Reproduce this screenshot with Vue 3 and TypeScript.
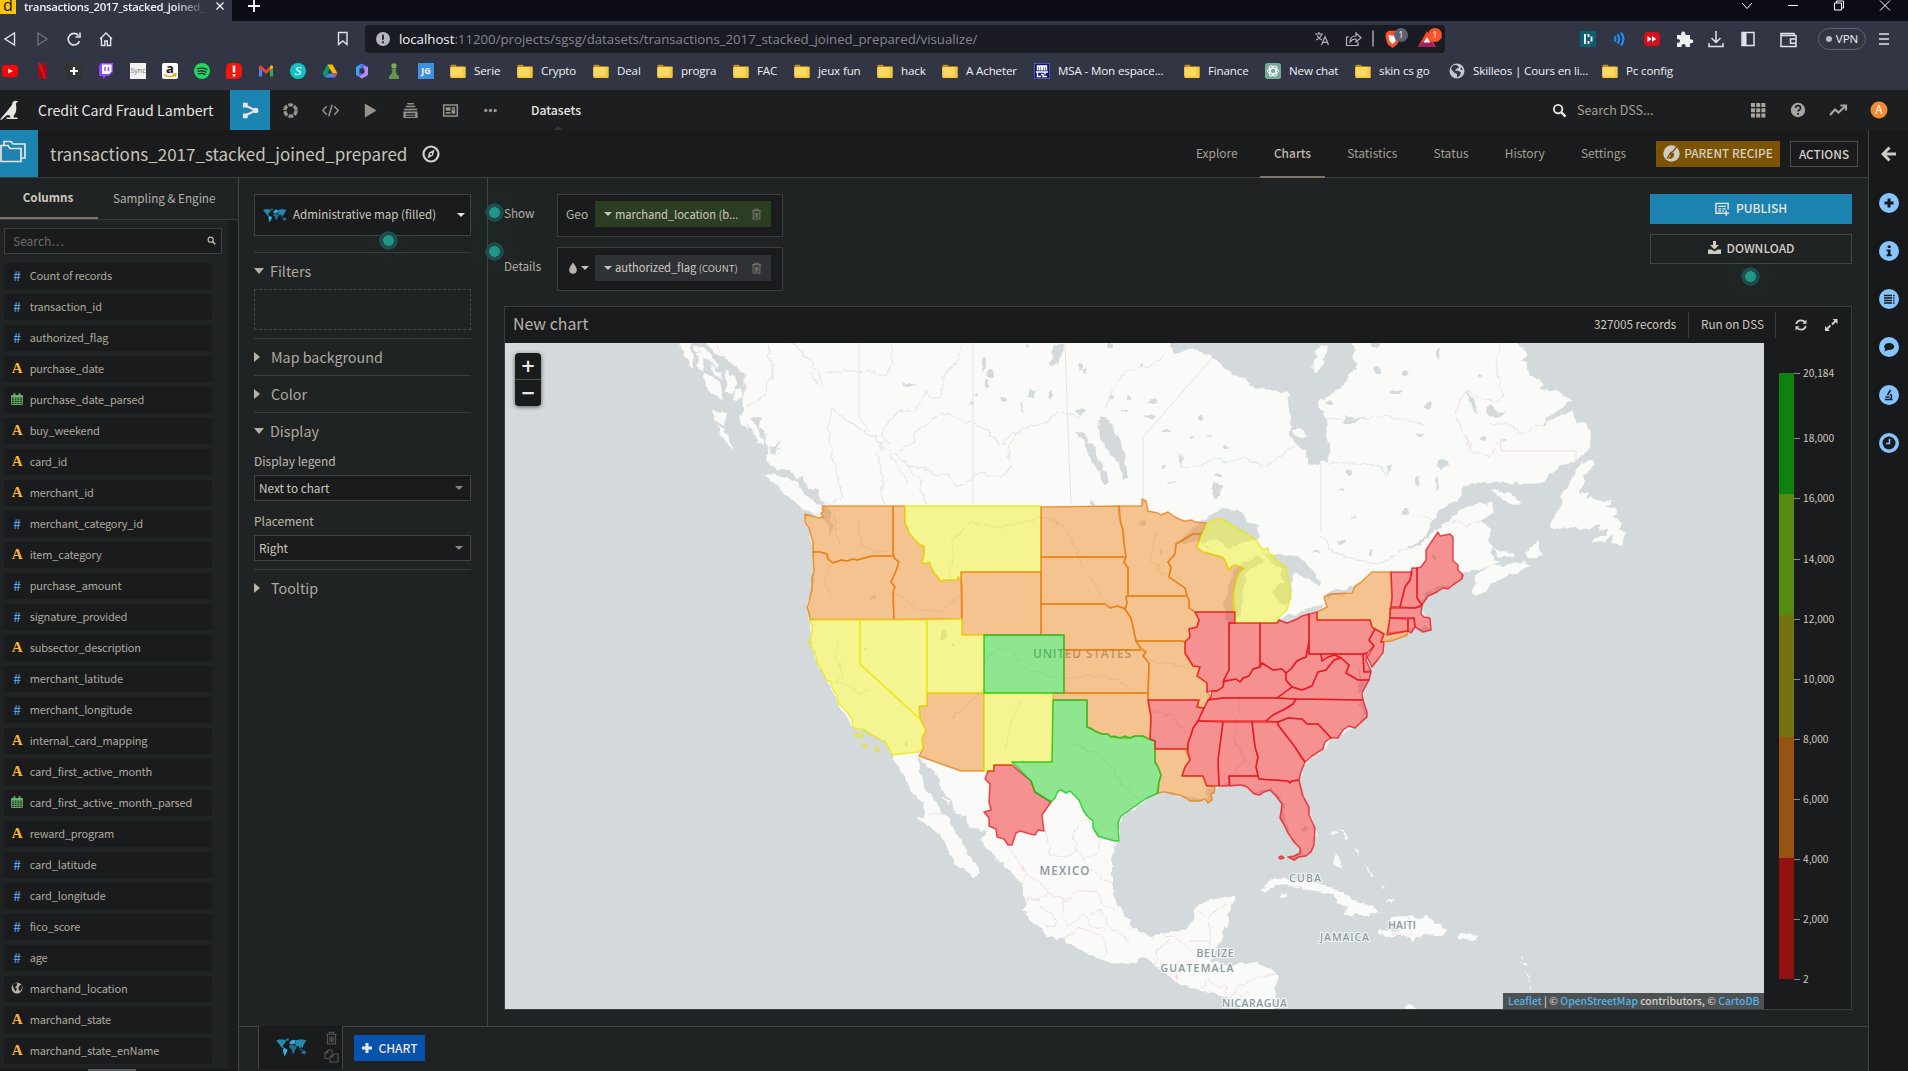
<script setup lang="ts">
interface Bookmark { label: string; icon: string; width: number }
interface Site { icon: string; letter?: string }
interface Column { name: string; kind: 'num' | 'text' | 'date' | 'place-kind' }
interface Region { tone: 'red' | 'orange' | 'yellow' | 'green'; pts: string }

const sites: Site[] = [
  { icon: 'youtube' }, { icon: 'netflix' }, { icon: 'cross' }, { icon: 'twitch' }, { icon: 'sync', letter: 'Sync' },
  { icon: 'amazon', letter: 'a' }, { icon: 'spotify' }, { icon: 'alert' }, { icon: 'gmail' }, { icon: 'letter-s', letter: 'S' },
  { icon: 'drive' }, { icon: 'office' }, { icon: 'pawn' }, { icon: 'jg', letter: 'JG' },
]

const bookmarks: Bookmark[] = [
  { label: 'Serie', icon: 'folder', width: 67 },
  { label: 'Crypto', icon: 'folder', width: 76 },
  { label: 'Deal', icon: 'folder', width: 64 },
  { label: 'progra', icon: 'folder', width: 76 },
  { label: 'FAC', icon: 'folder', width: 61 },
  { label: 'jeux fun', icon: 'folder', width: 83 },
  { label: 'hack', icon: 'folder', width: 65 },
  { label: 'A Acheter', icon: 'folder', width: 92 },
  { label: 'MSA - Mon espace...', icon: 'msa', width: 150 },
  { label: 'Finance', icon: 'folder', width: 81 },
  { label: 'New chat', icon: 'gpt', width: 90 },
  { label: 'skin cs go', icon: 'folder', width: 94 },
  { label: 'Skilleos | Cours en li...', icon: 'globe', width: 153 },
  { label: 'Pc config', icon: 'folder', width: 90 },
]

const headerTools: string[] = ['flow', 'recycle', 'code', 'play', 'stack', 'news', 'dots']
const sections: string[] = ['Explore', 'Charts', 'Statistics', 'Status', 'History', 'Settings']
const sideTools: string[] = ['plus', 'info', 'list', 'chat', 'lab', 'clock']

const columns: Column[] = [
  { name: 'Count of records', kind: 'num' },
  { name: 'transaction_id', kind: 'num' },
  { name: 'authorized_flag', kind: 'num' },
  { name: 'purchase_date', kind: 'text' },
  { name: 'purchase_date_parsed', kind: 'date' },
  { name: 'buy_weekend', kind: 'text' },
  { name: 'card_id', kind: 'text' },
  { name: 'merchant_id', kind: 'text' },
  { name: 'merchant_category_id', kind: 'num' },
  { name: 'item_category', kind: 'text' },
  { name: 'purchase_amount', kind: 'num' },
  { name: 'signature_provided', kind: 'num' },
  { name: 'subsector_description', kind: 'text' },
  { name: 'merchant_latitude', kind: 'num' },
  { name: 'merchant_longitude', kind: 'num' },
  { name: 'internal_card_mapping', kind: 'text' },
  { name: 'card_first_active_month', kind: 'text' },
  { name: 'card_first_active_month_parsed', kind: 'date' },
  { name: 'reward_program', kind: 'text' },
  { name: 'card_latitude', kind: 'num' },
  { name: 'card_longitude', kind: 'num' },
  { name: 'fico_score', kind: 'num' },
  { name: 'age', kind: 'num' },
  { name: 'marchand_location', kind: 'place-kind' },
  { name: 'marchand_state', kind: 'text' },
  { name: 'marchand_state_enName', kind: 'text' },
]

const legendTicks: [number, string][] = [
  [30, '20,184'], [95, '18,000'], [155, '16,000'], [216, '14,000'], [276, '12,000'], [336, '10,000'],
  [396, '8,000'], [456, '6,000'], [516, '4,000'], [576, '2,000'], [636, '2'],
]
const legendBands: [number, number, string][] = [
  [30, 121, '#0f810f'], [151, 121, '#548c11'], [272, 122, '#74740f'], [394, 121, '#955411'], [515, 121, '#921212'],
]

const mainland = '706,343 712,352 722,357 734,365 745,374 746,388 741,398 742,409 741,418 750,427 755,432 760,440 764,447 766,440 768,452 767,462 773,467 780,472 786,474 793,474 797,480 806,484 812,495 822,500 824,505 828,515 829,530 822,518 805,515 805,524 809,530 813,550 814,575 812,590 809,600 807,608 810,620 812,635 810,645 815,655 817,665 824,675 830,685 837,702 848,718 853,728 865,730 875,735 885,742 892,754 895,763 902,772 907,783 912,793 922,802 926,812 924,818 916,818 930,826 937,831 944,840 949,852 956,864 966,870 974,878 980,872 979,868 968,854 965,845 956,833 948,818 942,812 935,801 929,793 922,780 918,768 917,758 932,769 938,777 941,788 950,800 955,811 966,818 968,826 976,829 988,831 981,840 984,846 990,850 1000,862 1012,873 1022,885 1023,893 1027,903 1023,910 1027,918 1036,925 1047,936 1062,938 1074,948 1096,956 1110,963 1128,966 1140,960 1147,958 1155,965 1166,973 1178,984 1200,990 1215,994 1228,999 1235,1004 1240,1009 1240,1020 1274,1020 1274,1009 1275,990 1278,975 1270,968 1258,963 1245,964 1230,965 1211,961 1214,955 1219,945 1223,940 1222,932 1228,922 1228,915 1234,902 1237,896 1232,896 1220,898 1205,901 1197,907 1195,916 1190,925 1183,930 1172,932 1160,934 1150,937 1143,932 1134,929 1127,918 1118,904 1113,894 1112,885 1112,860 1115,845 1119,840 1119,824 1122,816 1135,808 1157,793 1165,792 1175,794 1188,797 1200,798 1208,801 1204,793 1207,787 1219,787 1230,784 1247,785 1255,792 1270,788 1280,798 1285,805 1284,820 1290,834 1296,845 1302,850 1302,856 1306,856 1314,845 1315,830 1309,812 1302,795 1299,780 1305,764 1315,756 1325,748 1332,738 1341,736 1353,727 1365,715 1363,708 1358,706 1364,702 1362,693 1358,688 1360,680 1357,660 1362,680 1369,680 1371,666 1383,653 1384,643 1391,639 1407,633 1410,629 1418,628 1425,628 1430,628 1430,618 1422,612 1421,603 1426,594 1436,588 1448,585 1460,578 1463,573 1472,569 1481,569 1487,567 1500,562 1490,553 1493,547 1488,540 1491,530 1482,522 1492,513 1493,503 1478,502 1465,508 1456,514 1442,525 1431,535 1420,545 1405,549 1425,538 1431,522 1440,510 1458,500 1464,487 1473,483 1496,482 1518,484 1543,483 1558,467 1576,460 1589,450 1590,430 1583,420 1577,424 1572,410 1556,417 1540,428 1547,419 1571,402 1566,395 1552,390 1540,391 1544,385 1538,378 1530,376 1527,366 1522,360 1526,353 1518,343 1518,330 1353,330 1353,343 1355,367 1348,378 1339,388 1326,398 1318,402 1326,417 1327,437 1331,449 1326,463 1321,459 1318,465 1310,463 1304,450 1295,443 1289,433 1291,418 1287,407 1288,393 1279,390 1257,388 1246,380 1228,372 1214,358 1192,349 1174,354 1170,343 1170,330 706,330'

const islands: string[] = [
  '680,340 690,340 694,360 692,369 685,358',
  '697,352 704,354 702,373 697,366 699,360',
  '693,345 704,348 711,356 719,365 716,369 708,361',
  '704,373 713,376 721,388 723,400 714,396 706,386',
  '710,365 718,371 723,379 716,377',
  '724,370 731,376 728,383',
  '727,380 734,373 737,384 732,396 727,390',
  '735,390 741,388 740,397 735,403',
  '711,412 727,413 724,425 718,422',
  '715,425 724,428 730,440 734,451 725,441',
  '739,415 745,420 749,429 742,424',
  '752,430 758,433 762,445 757,442',
  '765,474 777,475 790,480 798,482 803,492 812,500 823,507 822,517 813,514 802,508 795,502 783,493 777,485 770,482',
  '1594,460 1582,462 1574,474 1568,488 1560,494 1563,504 1558,510 1550,525 1556,529 1572,528 1590,529 1600,525 1598,531 1609,528 1605,536 1596,537 1590,542 1605,541 1613,534 1612,543 1621,545 1626,532 1619,531 1623,524 1612,517 1618,513 1616,507 1605,507 1612,500 1603,503 1594,498 1586,500 1590,494 1579,492 1585,481 1583,475 1592,468',
  '1491,490 1509,493 1522,503 1518,505 1504,501',
  '1473,574 1476,584 1472,589 1478,595 1487,591 1491,583 1505,577 1518,571 1530,567 1524,562 1508,563 1502,566 1493,564 1484,570',
  '1494,548 1500,552 1514,553 1514,557 1503,558 1496,554',
  '1537,540 1530,548 1525,554 1529,559 1543,556 1540,550',
  '1316,350 1322,345 1328,348 1324,360 1316,374 1313,369',
  '1292,431 1299,428 1306,436 1300,438',
  '1261,890 1269,882 1282,877 1295,880 1308,881 1329,886 1343,894 1357,902 1371,906 1381,912 1369,915 1343,915 1349,908 1337,903 1331,894 1316,891 1294,886 1278,884 1265,892',
  '1280,892 1286,893 1284,898 1280,896',
  '1390,917 1410,916 1427,917 1438,924 1447,930 1443,936 1427,934 1416,937 1412,943 1408,936 1396,936 1386,937 1378,933 1381,930 1400,932 1396,923 1389,921',
  '1460,933 1475,934 1478,937 1474,940 1460,939',
  '1336,853 1341,862 1342,870 1337,866 1334,858',
  '1328,832 1337,831 1337,833 1330,834',
  '1339,829 1346,832 1348,839 1345,842 1345,836',
  '1354,848 1359,852 1358,855',
  '1364,862 1374,877 1371,876',
  '1380,884 1385,886 1382,888',
  '1388,901 1394,899 1392,903 1387,903',
  '1404,1009 1407,1004 1413,1005 1416,1012 1404,1012',
  '944,797 950,802 947,804',
  '1521,957 1524,957 1523,960',
  '1521,962 1525,962 1527,966 1523,964',
  '1525,972 1529,977 1528,982',
  '1530,984 1532,988 1530,990',
  '1391,641 1405,634 1407,635 1392,642',
]

const lakes: string[] = [
  '1180,541 1190,530 1208,516 1222,508 1243,511 1247,522 1258,525 1260,538 1250,541 1240,544 1230,549 1222,543 1213,538 1204,545 1197,541 1184,543',
  '1235,567 1228,586 1224,605 1227,622 1233,624 1240,617 1243,600 1241,590 1247,580 1244,573 1256,566 1266,561 1258,557 1243,562',
  '1262,553 1275,555 1290,556 1300,557 1309,567 1320,580 1319,584 1305,578 1297,572 1291,580 1292,595 1287,606 1280,602 1273,593 1276,587 1284,581 1280,568 1270,561',
  '1278,620 1288,616 1303,611 1316,606 1326,604 1316,612 1303,617 1287,624 1278,623',
  '1324,594 1337,589 1352,587 1354,592 1341,595 1326,598',
  '1099,417 1109,419 1113,430 1118,438 1124,454 1128,478 1123,481 1120,463 1111,455 1106,447 1100,440',
  '1076,432 1086,433 1089,443 1095,446 1099,460 1107,473 1110,482 1103,485 1100,473 1090,460 1085,443',
  '1211,483 1217,484 1222,484 1221,498 1214,499 1211,493',
  '1030,390 1037,389 1034,397 1027,396',
  '1054,345 1064,343 1061,358 1055,367 1050,364',
  '1365,417 1352,424 1342,424 1345,415 1350,418',
  '1390,465 1393,466 1385,477 1383,481',
  '1492,404 1497,412 1505,414 1500,418 1491,416 1486,407',
  '1466,388 1474,402 1480,415 1470,406',
  '1438,460 1446,459 1448,466 1442,469 1438,465',
  '808,369 816,380 820,388 814,379',
  '768,446 774,447 781,438 776,450 783,448 777,453 770,454',
  '751,417 760,418 759,427 765,430 766,444 760,436 756,426',
  '779,469 790,470 797,478 803,477 806,490 817,490 822,503 810,496 800,484 788,479 778,474',
  '824,506 829,508 832,520 833,530 828,535 830,522 825,514',
]
const ponds: [number, number, number, number][] = [
  [984, 363, 3, 7], [991, 375, 3, 5], [987, 384, 2, 4], [1004, 399, 3, 3], [1050, 393, 2, 4], [972, 403, 2, 2], [1022, 408, 1, 5],
  [1080, 411, 4, 3], [1085, 372, 3, 3], [1110, 346, 3, 3], [1081, 366, 2, 4], [1150, 417, 6, 2], [1153, 401, 4, 3], [1112, 395, 3, 2],
  [1129, 398, 3, 2], [1124, 410, 3, 1], [1142, 365, 2, 2], [1200, 418, 4, 2], [1166, 431, 5, 1], [1192, 437, 2, 2], [1209, 435, 3, 1],
  [1226, 447, 2, 2], [1163, 466, 2, 3], [1171, 483, 5, 1], [1180, 462, 1, 6], [1219, 475, 3, 2], [1377, 370, 4, 3], [1405, 373, 3, 3],
  [1396, 392, 7, 2], [1355, 366, 2, 4], [1329, 402, 3, 2], [1428, 406, 3, 4], [1420, 435, 4, 2], [1349, 472, 2, 4], [1342, 490, 3, 1],
  [1405, 512, 4, 3], [1354, 517, 3, 1], [1417, 481, 2, 5], [1437, 483, 1, 8], [1341, 542, 5, 2], [1316, 552, 4, 1], [1371, 552, 2, 3],
  [1438, 353, 2, 6], [1480, 374, 2, 2], [1505, 440, 3, 1], [1483, 438, 3, 3], [1375, 345, 4, 2], [910, 385, 8, 1], [976, 395, 2, 1.5],
  [1028, 347, 2, 1], [1092, 503, 3, 2], [1208, 547, 3, 1], [1305, 828, 3, 3], [1143, 522, 4, 2], [1160, 552, 2, 2], [944, 634, 3, 5],
  [874, 598, 3, 1.5], [953, 645, 1, 2], [864, 648, 1, 2], [907, 744, 1, 3], [1314, 743, 1, 1], [1024, 912, 3, 1], [1434, 556, 1, 4],
]

const rivers: string[] = [
  '768,343 770,360 774,372 766,385 765,395 748,408',
  '792,343 808,358 818,374 824,390',
  '824,373 845,370 857,372 872,371 885,376 892,366 892,343',
  '963,343 957,362 943,377 941,396 930,398 925,392 916,410 902,410 884,425 882,437 890,444',
  '832,409 828,428 833,458 840,488 842,497 832,503 824,502',
  '832,409 848,420 862,431 874,436 884,450',
  '899,451 915,442 914,433 930,422 942,413 960,420 980,425 1002,446 1008,437 1022,429 1043,425 1058,412 1080,417',
  '902,460 912,467 925,468 935,474 950,476 956,488 970,480 978,472 1000,477 1010,468 1008,450 1018,430',
  '876,452 880,470 884,480 882,497 886,505',
  '890,455 898,468 907,483',
  '1180,452 1183,467 1200,466 1215,458 1225,462 1245,457 1262,467 1280,456 1297,446',
  '1105,410 1112,390 1125,372 1150,366 1165,354',
  '1326,418 1345,420 1390,416 1410,421 1425,425',
  '1328,463 1356,463 1380,465 1385,473',
  '1321,535 1328,548 1345,557 1365,562 1380,564 1405,548',
  '1490,424 1510,424 1522,435 1535,428 1560,415',
  '1418,515 1431,520', '951,580 952,540 972,522 1000,528 1040,518 1060,523 1072,540 1082,565 1098,590 1112,607',
  '893,592 915,608 940,612 960,595', '834,510 836,530 840,545', '830,565 823,585 835,598', '858,520 862,547 875,553 893,550',
  '840,640 835,652 842,678 835,682 850,685 858,695 870,688', '984,662 995,650 1020,648', '984,690 965,705 950,720',
  '1012,650 1025,670 1060,678 1105,676 1135,690', '1022,700 1012,720 1005,750', '1070,742 1090,750 1110,765 1125,790 1140,800',
  '1148,660 1170,665 1190,668', '1150,712 1170,715 1188,735', '1240,695 1235,740 1245,760 1230,775', '1155,533 1150,560 1165,575',
]
const borders: string[] = [
  '870,432 884,447 897,456 910,468 920,480 922,495 926,504',
  '716,343 724,358 734,366 745,374 745,389 739,399',
  '1500,343 1496,360 1499,380 1503,395 1498,402 1480,398 1467,390 1460,400 1457,412 1462,432 1468,440 1470,450 1490,458 1497,445 1500,438 1501,451',
  '1446,524 1460,522 1466,525 1483,521',
  '1008,846 1018,860 1026,875 1022,885', '1045,830 1050,845 1048,855 1065,857 1078,850', '1078,850 1073,835 1078,825 1086,817 1096,828 1100,840 1095,855 1080,860',
  '1078,850 1088,865 1098,875 1112,885', '1026,875 1043,885 1050,895 1040,900 1025,898', '1050,895 1070,900 1078,890 1095,892 1105,905 1115,912',
  '1065,900 1062,915 1068,928 1085,912 1090,925 1105,930', '1040,905 1058,920 1055,928 1045,925', '1064,938 1080,928 1100,935 1107,950 1105,958',
  '1090,915 1100,910 1108,925 1120,935 1130,940', '1195,908 1207,918 1228,902', '1207,918 1212,932 1208,945',
  '1180,962 1196,962 1196,955 1180,940 1165,935', '1155,965 1157,950 1170,940', '1207,980 1213,985 1226,988 1227,998', '1207,980 1200,988', '1230,1000 1240,985 1258,978 1277,974',
  '1392,934 1405,936', '1408,916 1410,934', '928,814 942,814', '1238,1009 1242,995 1250,990', '1176,980 1178,962',
]
const straightBorders: string[] = [
  '859,343 859,417 870,432', '973,343 973,504', '1065,343 1068,430 1071,504', '1143,500 1143,437 1212,358', '1321,463 1321,533',
  '1501,451 1576,451 1576,462', '1189,941 1210,941 1210,948',
]

const labels: [number, number, number, string][] = [
  [1064.5, 874.5, 50, 'MEXICO'], [1305, 882, 32, 'CUBA'], [1402, 928.5, 28, 'HAITI'], [1344.5, 940.5, 49, 'JAMAICA'],
  [1215, 956.5, 37, 'BELIZE'], [1197, 972, 73, 'GUATEMALA'], [1254.5, 1006.5, 65, 'NICARAGUA'],
]

const regions: Region[] = [
  { tone: 'orange', pts: '823,506 893,506 893,556 872,556 865,558 857,560 853,559 847,561 841,560 833,563 828,559 827,554 820,552 813,552 813,543 809,528 805,523 805,514 819,518 823,517 821,513 824,511 822,509' },
  { tone: 'orange', pts: '813,552 820,552 827,554 828,559 833,563 841,560 847,561 853,559 857,560 865,558 872,556 893,556 895,559 899,562 896,571 891,582 895,587 893,592 894,619.500 810,619.500 809,613 807,607 809,602 812,588 812,577 814,572' },
  { tone: 'orange', pts: '893,506 905,506 905,523 908,529 909,533 915,540 920,545 924,546 924,555 922,562 925,564 929,562 932,569 935,574 938,577 941,582 943,580 957,580 958,577 961,580 962,585 962,619 894,619.500 893,592 895,587 891,582 896,571 899,562 895,559 893,552' },
  { tone: 'yellow', pts: '905,506 1041,506 1041,572 961,572 961,580 958,577 957,580 943,580 941,582 938,577 935,574 932,569 929,562 925,564 922,562 924,555 924,546 920,545 915,540 909,533 908,529 905,523' },
  { tone: 'orange', pts: '961,572 1041,572 1041,635 962,635' },
  { tone: 'orange', pts: '1041,507 1119,506 1119,515 1121,524 1123,530 1124,543 1126,557 1041,557' },
  { tone: 'orange', pts: '1041,557 1126,557 1124,562 1128,568 1128,596 1126,597 1127,603 1125,609 1118,606 1110,608 1105,604 1041,604' },
  { tone: 'orange', pts: '1041,604 1105,604 1110,608 1118,606 1125,609 1131,618 1133,627 1136,641 1140,647 1141,650 1064,650 1064,635 1041,635' },
  { tone: 'orange', pts: '1064,650 1141,650 1146,652 1143,656 1149,663 1148,693 1064,693' },
  { tone: 'orange', pts: '1119,506 1142,506 1142,499 1146,501 1148,511 1158,513 1161,515 1168,512 1175,517 1179,519 1184,521 1192,520 1195,522 1207,523 1201,534 1193,534 1176,544 1175,554 1168,562 1171,567 1169,577 1185,588 1187,596 1128,596 1128,568 1124,562 1126,557 1124,543 1123,530 1121,524' },
  { tone: 'orange', pts: '1176,544 1193,534 1201,534 1197,547 1203,552 1212,554 1222,557 1225,560 1229,570 1232,566 1236,565 1244,568 1239,573 1235,585 1233,597 1235,612 1195,612 1189,608 1189,600 1187,596 1185,588 1169,577 1171,567 1168,562 1175,554' },
  { tone: 'orange', pts: '1128,596 1187,596 1189,600 1189,608 1195,612 1199,620 1197,627 1189,629 1190,637 1185,642 1182,641 1136,641 1133,627 1131,618 1125,609 1127,603 1126,597' },
  { tone: 'orange', pts: '1136,641 1182,641 1185,642 1185,653 1193,666 1200,667 1197,676 1207,683 1207,692 1211,697 1208,701 1204,708 1197,707 1199,700 1148,700 1149,663 1143,656 1146,652 1140,647' },
  { tone: 'orange', pts: '1053,693 1148,693 1148,700 1151,717 1150,739 1143,736 1135,736 1130,738 1120,738 1111,737 1108,734 1102,734 1095,731 1087,727 1087,700 1053,700' },
  { tone: 'orange', pts: '927,693 984,693 984,771 961,771 919,756 923,749 922,738 926,730 920,719 919,706 927,706' },
  { tone: 'orange', pts: '1155,749 1188,749 1190,760 1185,767 1182,776 1203,776 1205,783 1207,786 1215,787 1214,793 1211,794 1212,800 1208,803 1205,799 1200,801 1190,801 1186,798 1180,795 1173,794 1165,792 1157,793 1159,782 1161,775 1158,767 1155,762' },
  { tone: 'orange', pts: '1317,612 1327,607 1324,597 1330,594 1352,593 1355,586 1360,583 1372,572 1391,572 1392,597 1388,633 1408,631 1407,635 1392,641 1381,642 1384,634 1372,627 1370,620 1317,620' },
  { tone: 'yellow', pts: '810,620 860,620 860,664 920,719 926,730 922,738 923,749 918,752 892,755 889,748 885,743 878,738 874,736 870,735 865,731 860,729 853,728 852,719 847,712 838,703 837,695 833,690 831,682 826,680 824,675 817,662 815,652 809,643 812,635 812,625' },
  { tone: 'yellow', pts: '860,620 927,620 927,706 919,706 920,719 860,664' },
  { tone: 'yellow', pts: '927,620 962,619 962,635 984,635 984,693 927,693' },
  { tone: 'yellow', pts: '984,693 1053,693 1052,762 1012,762 1012,765 994,765 994,771 984,771' },
  { tone: 'yellow', pts: '854,734 864,735 862,737 856,736' },
  { tone: 'yellow', pts: '862,744 867,746 866,748' },
  { tone: 'yellow', pts: '875,747 879,750 877,752' },
  { tone: 'yellow', pts: '1207,523 1220,518 1255,539 1263,550 1268,548 1269,554 1275,556 1275,560 1286,567 1288,577 1291,595 1287,610 1279,617 1277,623 1235,623 1233,597 1235,585 1239,573 1244,568 1236,565 1232,566 1229,570 1225,560 1222,557 1212,554 1203,552 1197,547' },
  { tone: 'green', pts: '984,635 1064,635 1064,693 984,693' },
  { tone: 'red', pts: '988,771 994,771 994,765 1012,765 1031,781 1035,792 1051,802 1042,815 1044,831 1038,830 1035,835 1030,834 1020,831 1016,833 1012,845 1008,845 1004,839 997,837 996,829 989,826 989,818 984,812 991,810 989,802 990,784 985,779' },
  { tone: 'green', pts: '1053,700 1087,700 1087,727 1091,728 1095,731 1102,734 1108,734 1111,737 1114,736 1120,738 1125,736 1130,738 1135,736 1143,736 1148,739 1155,741 1155,762 1158,767 1161,775 1159,782 1158,793 1147,798 1121,816 1118,823 1119,841 1115,841 1107,839 1098,836 1093,828 1093,821 1088,817 1083,810 1079,800 1075,796 1070,791 1066,793 1061,790 1058,791 1055,798 1051,802 1035,792 1031,781 1012,762 1052,762' },
  { tone: 'red', pts: '1195,612 1235,612 1235,623 1229,623 1229,670 1224,679 1223,687 1217,691 1212,691 1207,692 1207,683 1197,676 1200,667 1193,666 1185,653 1185,642 1190,637 1189,629 1197,627 1199,620' },
  { tone: 'red', pts: '1229,623 1260,623 1260,667 1253,669 1249,676 1243,678 1240,682 1236,679 1223,682 1229,670' },
  { tone: 'red', pts: '1260,623 1277,623 1279,620 1287,623 1297,619 1302,616 1309,614 1309,642 1306,657 1301,659 1297,661 1291,669 1286,673 1282,669 1273,670 1262,663 1260,667' },
  { tone: 'red', pts: '1212,691 1217,691 1223,687 1224,681 1236,679 1240,682 1243,678 1249,676 1253,669 1260,667 1262,663 1273,670 1282,669 1286,673 1286,680 1292,687 1277,698 1223,698 1208,700 1211,697' },
  { tone: 'red', pts: '1208,700 1223,698 1277,698 1296,699 1293,704 1285,709 1273,715 1266,721 1198,721 1204,708' },
  { tone: 'red', pts: '1286,673 1291,669 1297,661 1301,659 1306,657 1309,642 1309,654 1321,654 1322,661 1328,657 1335,655 1341,658 1334,660 1326,670 1318,672 1312,686 1302,690 1292,687 1286,680' },
  { tone: 'red', pts: '1277,698 1292,687 1302,690 1312,686 1318,672 1326,670 1334,660 1341,658 1349,665 1346,673 1358,680 1369,680 1362,693 1363,700 1296,699' },
  { tone: 'red', pts: '1321,654 1363,654 1364,672 1371,672 1369,680 1358,680 1346,673 1349,665 1341,658 1335,655 1328,657 1322,661' },
  { tone: 'red', pts: '1363,654 1367,653 1366,660 1371,671 1364,672' },
  { tone: 'red', pts: '1309,614 1317,612 1317,620 1370,620 1372,627 1375,629 1369,640 1374,646 1367,653 1363,654 1309,654' },
  { tone: 'red', pts: '1375,629 1384,634 1381,642 1384,642 1383,653 1372,667 1367,657 1374,646 1369,640' },
  { tone: 'red', pts: '1391,572 1412,572 1410,580 1405,587 1400,607 1391,607 1392,597' },
  { tone: 'red', pts: '1412,568 1417,568 1417,598 1422,605 1415,608 1400,607 1405,587 1410,580' },
  { tone: 'red', pts: '1417,568 1421,567 1426,560 1426,550 1438,532 1440,536 1450,534 1453,537 1453,561 1458,565 1458,570 1463,575 1462,579 1453,585 1448,589 1443,588 1437,592 1428,596 1422,605 1417,598' },
  { tone: 'red', pts: '1390,608 1415,608 1422,606 1421,614 1424,617 1430,618 1431,630 1423,632 1415,627 1414,618 1390,618' },
  { tone: 'red', pts: '1390,618 1408,619 1408,631 1387,635' },
  { tone: 'red', pts: '1408,619 1414,618 1415,627 1411,633 1408,631' },
  { tone: 'red', pts: '1296,699 1363,700 1367,712 1367,717 1355,728 1349,726 1343,730 1338,738 1331,738 1318,724 1307,724 1302,719 1288,718 1278,722 1266,721 1273,715 1285,709 1293,704' },
  { tone: 'red', pts: '1278,722 1288,718 1302,719 1307,724 1318,724 1331,738 1325,742 1323,749 1312,756 1305,762 1302,758 1295,747 1278,725' },
  { tone: 'red', pts: '1252,722 1278,722 1278,725 1295,747 1302,758 1305,762 1301,772 1299,780 1292,781 1290,783 1288,781 1259,779 1256,767 1258,757 1255,747' },
  { tone: 'red', pts: '1223,722 1252,722 1255,747 1258,757 1256,767 1258,776 1229,776 1230,784 1227,786 1219,786 1218,760' },
  { tone: 'red', pts: '1198,721 1223,722 1218,760 1219,786 1207,786 1203,776 1182,776 1185,767 1190,760 1187,752 1188,743 1191,735 1193,728' },
  { tone: 'red', pts: '1148,700 1199,700 1197,707 1204,708 1198,721 1193,728 1191,735 1188,743 1188,749 1155,749 1155,741 1150,739 1151,717' },
  { tone: 'red', pts: '1229,776 1258,776 1259,779 1288,781 1290,783 1292,781 1299,780 1303,796 1309,807 1309,815 1315,828 1314,845 1311,852 1306,856 1299,857 1294,860 1288,857 1294,856 1300,853 1300,848 1294,842 1288,833 1283,823 1280,818 1282,804 1276,796 1270,790 1264,792 1260,795 1254,794 1247,787 1241,785 1229,786' },
  { tone: 'red', pts: '1279,857 1282,856 1284,858 1280,859' },
]
</script>

<template>
  <div class="screen">
    <svg class="sprite" aria-hidden="true">
      <symbol id="youtube" viewBox="0 0 16 16"><rect y="2" width="16" height="12" rx="3" fill="#f00" /><path d="M6.3 5.500v5L10.800 8z" fill="#fff" /></symbol>
      <symbol id="netflix" viewBox="0 0 16 16"><path d="M4 0h3v16H4zM9.500 0h3v16h-3z" fill="#b00610" /><path d="M4 0h3l5.500 16h-3z" fill="#e50914" /></symbol>
      <symbol id="cross" viewBox="0 0 16 16"><rect width="16" height="16" rx="1" fill="#333" /><path d="M8 4v8M4 8h8" stroke="#fff" stroke-width="2.200" /></symbol>
      <symbol id="twitch" viewBox="0 0 16 16"><path d="M3 0h12v9l-4 4H8l-3 3v-3H1V3z" fill="#9147ff" /><path d="M4 1.500h9.500v7L11 11H4z" fill="#fff" /><path d="M7 4v4M10.500 4v4" stroke="#9147ff" stroke-width="1.400" /></symbol>
      <symbol id="spotify" viewBox="0 0 16 16"><circle cx="8" cy="8" r="8" fill="#1ed760" /><path d="M3.500 5.700q5-1.500 9.300.8M4 8.300q4.300-1.200 8 .8M4.500 10.800q3.600-1 6.500.6" fill="none" stroke="#123" stroke-width="1.300" stroke-linecap="round" /></symbol>
      <symbol id="alert" viewBox="0 0 16 16"><path d="M5 0h6a5 5 0 0 1 5 5v6a5 5 0 0 1-5 5H0V5a5 5 0 0 1 5-5" fill="#f5150f" /><path d="M8 2.500v7M8 11v2.500" stroke="#fff" stroke-width="2.500" /></symbol>
      <symbol id="gmail" viewBox="0 0 16 16"><path d="M1 3v10.500h3V7" fill="#4285f4" /><path d="M15 3v10.500h-3V7" fill="#34a853" /><path d="M1.500 3.200L8 9l6.500-5.800" fill="none" stroke="#ea4335" stroke-width="3" /><path d="M12 7l3-2.500V3l-1.500-.8L12 4z" fill="#fbbc04" /></symbol>
      <symbol id="drive" viewBox="0 0 16 16"><path d="M5.500 1.500L.5 10.500 3 14.500 8 5.500z" fill="#0f9d58" /><path d="M5.500 1.500h5l5 9h-5z" fill="#fbbc04" /><path d="M3 14.500l2.500-4h10l-2.500 4z" fill="#4285f4" /><path d="M15.500 10.500l-2.500 4-2.200-4z" fill="#ea4335" /></symbol>
      <symbol id="office" viewBox="0 0 16 16"><path d="M8 .5l6 3.500v8l-6 3.500-6-3.500V4z" fill="#5a67e8" /><path d="M8 .5l-6 3.500v8l3 1.500V6z" fill="#35a5f0" /><path d="M14 4v8l-6 3.500-3-2 5-3V3z" fill="#b78bf2" /><path d="M8 5l2.500 1.500v3L8 11 5.500 9.500v-3z" fill="#323544" /></symbol>
      <symbol id="pawn" viewBox="0 0 16 16"><circle cx="8" cy="3" r="2.700" fill="#7fa650" /><path d="M5 6h6l-1.500 1.500q.3 3 3.500 6V16H3v-2.500q3.200-3 3.500-6z" fill="#5d9948" /></symbol>
      <symbol id="folder" viewBox="0 0 16 16"><path d="M.5 3q0-1.200 1.200-1.200h4L7 3.200h7.800q.9 0 .9.900V6H.5z" fill="#c08f1d" /><rect x=".3" y="4" width="15.400" height="11" rx="1" fill="#f5c842" /><rect x=".3" y="4" width="12" height="9" rx="1" fill="#ffdf70" opacity=".75" /></symbol>
      <symbol id="msa" viewBox="0 0 16 16"><rect width="16" height="16" fill="#12127a" stroke="#8b90cf" /><path d="M3.500 7.500V3h3.800v4.500M8.700 7.500V3h3.800v4.500M5.400 3v4.500M10.600 3v4.500M2 9h12M3.500 9.500v4H7M9 13.500h4M7 11.500h2v3M11 9.500v2" fill="none" stroke="#fff" stroke-width="1.400" /></symbol>
      <symbol id="gpt" viewBox="0 0 16 16"><rect width="16" height="16" rx="2.500" fill="#75a99c" /><g fill="none" stroke="#fff"><ellipse cx="8" cy="8" rx="5.500" ry="2.700" /><ellipse cx="8" cy="8" rx="5.500" ry="2.700" transform="rotate(60 8 8)" /><ellipse cx="8" cy="8" rx="5.500" ry="2.700" transform="rotate(120 8 8)" /></g></symbol>
      <symbol id="globe" viewBox="0 0 16 16"><circle cx="8" cy="8" r="7.500" fill="#c4c6d0" /><path d="M3.500 3Q6 1.500 8.500 2.500L10 4.500 7 6l-1 1.500 3.500.5L12 9.500 10.500 13 8 14.500V11L5 9.500 2 6zM12 4l2 3-2.500-.5z" fill="#323544" /></symbol>
      <symbol id="world" viewBox="0 0 30 18">
        <path d="M0 2.500L3.500 1l4 .3 2.500 1L9 4.500 7.500 6l-1 1.500L7.500 9l1 .5L7 10 4.500 8 3 5.500 1.500 4zM9 .8l3.500-.6L11.500 3z" fill="#2589ad" />
        <path d="M7.800 9.500l3 1.200L11 12.500 9.500 15l-1 2.800-1-2.500-.8-4z" fill="#2fb4e6" />
        <path d="M13 5.500l.5-2L16 1.500l3 .5-.5 3-3 .8z" fill="#2fb4e6" />
        <path d="M12.800 6.500l3-.5 3 1.200 1.200 2-1.500 2-1 3.300-1.300.5-1-3L14.500 10l-1.700-.7z" fill="#1d6f8c" />
        <path d="M19 2l5-1 5.500 1-1 1.500L27 6l-1.500 3.500-1-1L23 10l-1.200-2.500L20 8l-1.500-2z" fill="#2589ad" />
        <path d="M24.500 13l3-1.500 1.500 2-1 2-3.200-.8zM23 10l3 1.500-.5.600-2.500-1z" fill="#24749a" />
      </symbol>
      <symbol id="flow" viewBox="0 0 18 18"><path d="M3 3.500L14.500 9 3 14.500" fill="none" stroke="currentColor" stroke-width="2.200" /><path d="M1 .8h5v5H1zM1 12.200h5v5H1z" fill="currentColor" /><circle cx="14.500" cy="9" r="2.800" fill="currentColor" /></symbol>
      <symbol id="recycle" viewBox="0 0 18 18"><circle cx="9" cy="9" r="6" fill="none" stroke="currentColor" stroke-width="3.600" stroke-dasharray="5 1.280" /></symbol>
      <symbol id="code" viewBox="0 0 18 18"><path d="M5 4.500L.8 9 5 13.500M13 4.500L17.200 9 13 13.500M10.800 3L7.200 15" fill="none" stroke="currentColor" stroke-width="1.600" /></symbol>
      <symbol id="play" viewBox="0 0 18 18"><path d="M3 1.500L15.500 9 3 16.500z" fill="currentColor" /></symbol>
      <symbol id="stack" viewBox="0 0 18 18"><path d="M5.500 1.800h7M4 4.800h10M2 8h14" stroke="currentColor" stroke-width="1.700" /><path d="M1.500 10h15v7h-15zM4 12v1.400h10V12zM4 14.600V16h10v-1.400z" fill="currentColor" fill-rule="evenodd" /></symbol>
      <symbol id="news" viewBox="0 0 18 18"><path d="M1 2.500h16v13H1zM2.600 4v10h12.800V4z" fill="currentColor" fill-rule="evenodd" /><path d="M4 5.500h5v3.700H4zM4 10.500h5v2H4zM10.200 5.500h3.800v1.600h-3.800zM10.200 8h3.800v4.500h-3.800z" fill="currentColor" /></symbol>
      <symbol id="dots" viewBox="0 0 18 18"><circle cx="4" cy="9" r="1.800" fill="currentColor" /><circle cx="9" cy="9" r="1.800" fill="currentColor" /><circle cx="14" cy="9" r="1.800" fill="currentColor" /></symbol>
      <symbol id="search" viewBox="0 0 16 16"><circle cx="6.500" cy="6.500" r="4.500" fill="none" stroke="currentColor" stroke-width="2" /><path d="M10 10l4.500 4.500" stroke="currentColor" stroke-width="2.600" /></symbol>
      <symbol id="trash" viewBox="0 0 12 13"><path d="M1 3h10M4 3V1.200h4V3M2.300 3v9h7.400V3M4.500 5v5.200M6 5v5.200M7.500 5v5.200" fill="none" stroke="currentColor" stroke-width="1.100" /></symbol>
      <symbol id="calendar" viewBox="0 0 12 12"><path d="M.6 2.500h10.800v9H.6zM.6 5h10.800M3.300 4v7.500M6 4v7.500M8.700 4v7.500M.6 7.200h10.800M.6 9.400h10.800" fill="none" stroke="currentColor" stroke-width=".9" /><path d="M.6 2.300h10.800v1.900H.6zM2.500.3h1.800v2.500H2.500zM7.700.3h1.800v2.500H7.700z" fill="currentColor" /></symbol>
      <symbol id="plus" viewBox="0 0 20 20"><path d="M10 5.500v9M5.500 10h9" stroke="#17191b" stroke-width="3" /></symbol>
      <symbol id="info" viewBox="0 0 20 20"><path d="M8.700 4.500h3v2.500h-3zM7.500 8.500h4v5h1.300v1.700H7.500v-1.700h1.300v-3.300H7.500z" fill="#17191b" /></symbol>
      <symbol id="list" viewBox="0 0 20 20"><path d="M5 6.500h8M5 9h8M5 11.500h8M5 14h8M14 6.500h1.500M14 9h1.500M14 11.500h1.500M14 14h1.500" stroke="#17191b" stroke-width="1.400" /></symbol>
      <symbol id="chat" viewBox="0 0 20 20"><ellipse cx="10.200" cy="9.500" rx="5" ry="3.600" fill="#17191b" /><path d="M6.500 11l-1 3.500 4-1.800z" fill="#17191b" /></symbol>
      <symbol id="lab" viewBox="0 0 20 20"><path d="M6 14.500h7.500M11.500 5L8.500 10M11.500 9q2 2.500 0 5M6.500 12h4" fill="none" stroke="#17191b" stroke-width="1.500" /></symbol>
      <symbol id="clock" viewBox="0 0 20 20"><circle cx="10" cy="10" r="6.500" fill="#17191b" /><path d="M10.500 6v4.500H7" fill="none" stroke="#86c3ff" stroke-width="1.600" /></symbol>
    </svg>

    <header class="browser">
      <div class="tabstrip">
        <div class="tab">
          <span class="favicon">d</span>
          <span class="tab-title">transactions_2017_stacked_joined_</span>
          <svg class="tab-close" viewBox="0 0 10 10"><path d="M1.500 1.500l7 7M8.500 1.500l-7 7" stroke="#fff" stroke-width="1.300" /></svg>
        </div>
        <svg class="tab-new" viewBox="0 0 12 12"><path d="M6 0v12M0 6h12" stroke="#fff" stroke-width="1.800" /></svg>
        <svg class="win-buttons" viewBox="0 0 150 12"><g fill="none" stroke="#fff"><path d="M1 3l5 5.500L11 3M47 5.500h10M93.500 3h7v7h-7zM95.500 3V1h7v7h-2M139 .5l10 10M149 .5l-10 10" /></g></svg>
      </div>
      <div class="toolbar">
        <svg class="nav-icons" viewBox="0 0 120 18"><g fill="none" stroke="#e4e4e8" stroke-width="1.400"><path d="M14.500 3v12L5 9z" /><path d="M38 3v12l9-6z" stroke="#6c6f7e" /><path d="M78.500 5.500A5.800 5.800 0 1 0 79.500 11M80 2.500v4.500h-4.500" stroke-width="1.600" /><path d="M100 9l6-6 6 6M101.500 8v7.500h3.300V11h2.500v4.500h3.300V8" /></g></svg>
        <svg class="mark" viewBox="0 0 12 16"><path d="M1.500 1.500h8.500v12L5.800 10 1.500 13.500z" fill="none" stroke="#e4e4e8" stroke-width="1.400" /></svg>
        <div class="address">
          <svg class="site-info" viewBox="0 0 14 14"><circle cx="7" cy="7" r="7" fill="#b4b6bf" /><path d="M7 2.800v5M7 9.300v2" stroke="#1a1b23" stroke-width="1.800" /></svg>
          <span class="url"><b>localhost</b>:11200/projects/sgsg/datasets/transactions_2017_stacked_joined_prepared/visualize/</span>
          <svg class="address-icons" viewBox="0 0 130 28">
            <g fill="none" stroke="#b4b6bf" stroke-width="1.200"><path d="M2 9h8M6 7v2M3 15q5-2 5.500-6M4 10.500q2 3.500 5 4.500M8.500 20l3.500-8.500 3.500 8.500M9.800 17.300h4.500" /><path d="M36 12h-2.500v8.500H45V17M37 17q0-6 6-6V8l5 4.800-5 4.200v-3q-4 0-6 3z" /><path d="M60 5.500v16" stroke="#c8c9d2" /></g>
            <path d="M73 8l2.500-2.200h8L86 8l.5 3-1.800 8-5.200 4-5.200-4-1.800-8z" fill="#fb542b" /><path d="M75.500 10l4 .8 4-.8-1 6-3 3.200-3-3.200z" fill="#fff" /><circle cx="88" cy="10" r="7" fill="#5e6173" /><text x="88" y="13" font-size="8.500" text-anchor="middle" fill="#fff">1</text>
            <path d="M114 6l-9 16h18z" fill="#ff4724" /><path d="M105 22l4.500-5h9l4.500 5z" fill="#9e1f63" /><path d="M114 12l-3.300 5.500h6.600z" fill="#fff" /><circle cx="122" cy="10" r="7" fill="#fb542b" /><text x="122" y="13" font-size="8.500" text-anchor="middle" fill="#fff">1</text>
          </svg>
        </div>
        <svg class="extensions" viewBox="0 0 220 20">
          <rect x="1" y="2" width="16" height="16" rx="1" fill="#0e6070" /><path d="M6 5v10M9.500 5v3M9.500 12v3M12.500 7.500v5" stroke="#fff" stroke-width="1.800" />
          <path d="M35.500 7.500q2 2.500 0 5M38.500 5.500q3.500 4.500 0 9M42 3.500q5 6.500 0 13" fill="none" stroke="#1e90ff" stroke-width="2.100" />
          <rect x="65" y="3" width="16" height="14" rx="4" fill="#d5101c" /><path d="M68.500 7v6l4.200-3zM73 7v6l4.200-3z" fill="#fff" />
          <path d="M98 6h4q0-3.500 2.300-3.500T106.500 6h4.500v4.200q3.300 0 3.300 2T111 14.300V18h-4.200q0-3-2.200-3t-2.200 3H98v-4.300q3 0 3-1.800t-3-1.900z" fill="#f0f0f3" />
          <g fill="none" stroke="#e4e4e8" stroke-width="1.500"><path d="M137 2v11M132.500 9l4.500 4.500 4.500-4.500M130 14v3.500h14V14M163 3.500h12v13h-12z" /><path d="M165.500 3.500v13" stroke-width="4" /><path d="M202 6.500V4.500h13v2.300M202 6v11.500h15v-11h-15M217 10h-5.500v4.300h5.500" /></g>
        </svg>
        <div class="vpn"><i></i>VPN</div>
        <svg class="menu" viewBox="0 0 10 14"><path d="M0 2h10M0 7h10M0 12h10" stroke="#e4e4e8" stroke-width="1.600" /></svg>
      </div>
      <div class="bookmarks">
        <span v-for="s in sites" :key="s.icon" class="site" :class="s.icon">
          <template v-if="s.letter">{{ s.letter }}</template>
          <svg v-else><use :href="'#' + s.icon" /></svg>
          <svg v-if="s.icon === 'amazon'" class="smile" viewBox="0 0 16 6"><path d="M2 1.500q6 4 11 .5M11 1.200l3-.2-.8 2.500" fill="none" stroke="#f90" stroke-width="1.400" /></svg>
        </span>
        <span v-for="b in bookmarks" :key="b.label" class="bookmark" :style="{ width: b.width + 'px' }">
          <svg><use :href="'#' + b.icon" /></svg>{{ b.label }}
        </span>
      </div>
    </header>

    <div class="topbar">
      <svg class="bird" viewBox="0 0 19 20"><path d="M18.500 1.500l-3-.8q-3 0-3.500 4L8 10 0 19.500l1.500.3L7 15l3 .5.5 2H6.500V19h11v-1.500h-4l.3-2q3.500-4 2.300-10V3z" fill="#e8e6e3" /></svg>
      <span class="project">Credit Card Fraud Lambert</span>
      <span v-for="(tool, i) in headerTools" :key="tool" class="tool" :class="{ on: i === 0 }"><svg><use :href="'#' + tool" /></svg></span>
      <span class="crumb">Datasets</span>
      <svg class="search-icon"><use href="#search" /></svg>
      <span class="search-text">Search DSS...</span>
      <svg class="right-icons" viewBox="0 0 140 20">
        <path d="M3 3h4v4H3zM8.200 3h4v4h-4zM13.400 3h4v4h-4zM3 8.200h4v4H3zM8.200 8.200h4v4h-4zM13.400 8.200h4v4h-4zM3 13.400h4v4H3zM8.200 13.400h4v4h-4zM13.400 13.400h4v4h-4z" fill="#a8a5a0" />
        <circle cx="50" cy="10" r="7.200" fill="#a8a5a0" /><path d="M47.500 8q0-2.300 2.500-2.300T52.500 8q0 1.300-1.300 2T50 11.500M50 13v1.700" fill="none" stroke="#1c1e1f" stroke-width="1.700" />
        <path d="M82 15l5-5.500 3.500 3L97.500 6M92.500 5.500h5.500v5" fill="none" stroke="#a8a5a0" stroke-width="2.200" />
        <circle cx="131" cy="10" r="8.500" fill="#f28b32" /><text x="131" y="14.300" font-size="12" text-anchor="middle" fill="#fff">A</text>
      </svg>
    </div>

    <div class="shell">
      <div class="main">
        <div class="titlebar">
          <span class="dataset-icon"><svg viewBox="0 0 28 24"><g fill="none" stroke="#e8e6e3" stroke-width="1.700"><path d="M1 5.500h7l2 3h11v13H1z" /><path d="M4 5V1.500h7l2 2.500h12v14h-3.500" /></g></svg></span>
          <span class="dataset-name">transactions_2017_stacked_joined_prepared</span>
          <svg class="compass" viewBox="0 0 18 18"><circle cx="9" cy="9" r="7.500" fill="none" stroke="#d5d0c8" stroke-width="2.200" /><path d="M12.500 4.500L11 10.500 5.500 13.500 7 7.500zM9 8a1 1 0 1 0 .1 0" fill="#d5d0c8" fill-rule="evenodd" /></svg>
          <nav class="sections">
            <span v-for="s in sections" :key="s" :class="{ active: s === 'Charts' }">{{ s }}</span>
          </nav>
          <span class="recipe"><svg viewBox="0 0 18 18"><circle cx="9" cy="9" r="8.700" fill="#d0cbc3" /><path d="M14.500 2L10 7.500" stroke="#7c5300" stroke-width="1.500" /><path d="M8.500 6.500l3.500 3q-.5 4-3.500 5l-5-.3q2.500-4.700 5-7.700z" fill="#7c5300" /><path d="M6 13.500l2-3" stroke="#d0cbc3" /></svg>PARENT RECIPE</span>
          <span class="actions">ACTIONS</span>
        </div>

        <div class="body">
          <aside class="columns-panel">
            <div class="panel-tabs"><span class="current">Columns</span><span>Sampling &amp; Engine</span></div>
            <div class="columns-wrap">
              <div class="columns-list">
                <div class="search-box"><span>Search…</span><svg><use href="#search" /></svg></div>
                <div v-for="c in columns" :key="c.name" class="column-item">
                  <span class="kind" :class="c.kind">
                    <template v-if="c.kind === 'num'">#</template>
                    <template v-else-if="c.kind === 'text'">A</template>
                    <svg v-else-if="c.kind === 'date'"><use href="#calendar" /></svg>
                    <svg v-else viewBox="0 0 12 12"><circle cx="6" cy="6" r="5.500" fill="#b5afa5" /><path d="M1.500 3L4 1l2.500.5L5.500 4 4 5l2 2-1.500 2.500L3 7zM8 4l2.500-1.500L11 6 9 9.500 7.500 7z" fill="#191b1c" /></svg>
                  </span>
                  <span>{{ c.name }}</span>
                </div>
              </div>
              <div class="scroll-track"></div>
            </div>
            <div class="h-scroll"><i></i></div>
          </aside>

          <div class="work">
            <div class="chart-area">
              <aside class="options">
                <div class="chart-type"><svg><use href="#world" /></svg><span>Administrative map (filled)</span><i class="caret white"></i><b class="beacon"></b></div>
                <section class="filters"><h4><i class="caret"></i>Filters</h4><div class="dropzone"></div></section>
                <section class="closed"><h4><i class="caret side"></i>Map background</h4></section>
                <section class="closed"><h4><i class="caret side"></i>Color</h4></section>
                <section class="display">
                  <h4><i class="caret"></i>Display</h4>
                  <label>Display legend</label><div class="select"><span>Next to chart</span><i class="caret small"></i></div>
                  <label>Placement</label><div class="select"><span>Right</span><i class="caret small"></i></div>
                </section>
                <section class="closed"><h4><i class="caret side"></i>Tooltip</h4></section>
              </aside>

              <main class="chart">
                <div class="definition">
                  <div class="rows">
                    <div class="row"><span class="row-name">Show<b class="beacon"></b></span>
                      <div class="slot"><span class="geo">Geo</span><div class="pill geo-pill"><i class="caret mini"></i><span>marchand_location (b...</span><svg><use href="#trash" /></svg></div></div>
                    </div>
                    <div class="row second"><span class="row-name">Details<b class="beacon"></b></span>
                      <div class="slot"><span class="geo drop"><svg viewBox="0 0 8 12"><path d="M4 .5q-3.800 5-3.800 7.500a3.800 3.800 0 0 0 7.600 0Q7.800 5.500 4 .5z" fill="#b8b2a8" /></svg><i class="caret mini"></i></span><div class="pill"><i class="caret mini"></i><span>authorized_flag <small>(COUNT)</small></span><svg><use href="#trash" /></svg></div></div>
                    </div>
                  </div>
                  <div class="exports">
                    <div class="publish"><svg viewBox="0 0 16 15"><path d="M8.500 11.500H1V1h13v6.500" fill="none" stroke="#e8e6e3" stroke-width="1.500" /><path d="M3.500 4.200h8M3.500 6.800h3M7.800 6.800h3.700M3.500 9h3M7.800 9h2M12 8.500v6M9 11.500h6" stroke="#e8e6e3" stroke-width="1.500" /></svg><span>PUBLISH</span></div>
                    <div class="download"><svg viewBox="0 0 13 13"><path d="M5 0h3v4h3L6.500 8.500 2 4h3zM0 8.500h3.500l3 2 3-2H13V13H0z" fill="#d0cbc3" /></svg><span>DOWNLOAD</span><b class="beacon"></b></div>
                  </div>
                </div>

                <div class="frame">
                  <div class="frame-head">
                    <span class="frame-title">New chart</span>
                    <span class="records">327005 records</span>
                    <span class="run">Run on DSS</span>
                    <svg class="frame-icons" viewBox="0 0 44 14"><g fill="none" stroke="#d5d0c8" stroke-width="1.800"><path d="M1.200 6q1-3.700 4.800-3.700 2.500 0 4 2M10.800 8q-1 3.700-4.800 3.700-2.500 0-4-2M31.500 11.500l4-4M37 6.500l4-4" /></g><path d="M11.500 1.500v4.200H7.300zM.5 12.500V8.300h4.200zM30 8v5h5zM37.500 1h5v5z" fill="#d5d0c8" /></svg>
                  </div>
                  <div class="frame-body">
                    <div class="map">
                      <svg class="tiles" viewBox="505 343 1259 666">
                        <defs>
                          <filter id="coast" x="505" y="343" width="1259" height="666" filterUnits="userSpaceOnUse">
                            <feTurbulence type="fractalNoise" baseFrequency=".13" numOctaves="2" seed="4" />
                            <feDisplacementMap in="SourceGraphic" scale="7" xChannelSelector="R" yChannelSelector="G" />
                          </filter>
                        </defs>
                        <g filter="url(#coast)">
                          <polygon class="land" :points="mainland" />
                          <polygon v-for="p in islands" :key="p" class="land" :points="p" />
                          <polygon v-for="p in lakes" :key="p" class="lake" :points="p" />
                          <ellipse v-for="(p, i) in ponds" :key="'pond' + i" class="lake" :cx="p[0]" :cy="p[1]" :rx="p[2]" :ry="p[3]" />
                          <polyline v-for="p in rivers" :key="p" class="river" :points="p" />
                          <polyline v-for="p in borders" :key="p" class="border" :points="p" />
                        </g>
                        <polyline v-for="p in straightBorders" :key="p" class="border" :points="p" />
                        <text class="place us" x="1082" y="657.500" textLength="98">UNITED STATES</text>
                        <polygon v-for="r in regions" :key="r.pts" :class="['region', r.tone]" :points="r.pts" />
                        <text v-for="l in labels" :key="l[3]" class="place" :x="l[0]" :y="l[1]" :textLength="l[2]" :class="{ big: l[3] === 'MEXICO' }">{{ l[3] }}</text>
                      </svg>
                      <div class="zoomer"><span>+</span><span>−</span></div>
                      <div class="credit"><a>Leaflet</a> | © <a>OpenStreetMap</a> contributors, © <a>CartoDB</a></div>
                    </div>
                    <svg class="legend" viewBox="0 0 87 666">
                      <rect v-for="b in legendBands" :key="b[0]" x="15" :y="b[0]" width="15" :height="b[1]" :fill="b[2]" />
                      <g v-for="t in legendTicks" :key="t[1]"><path :d="`M30 ${t[0] + 0.5}h6`" stroke="#8d8a85" /><text x="39" :y="t[0] + 4">{{ t[1] }}</text></g>
                    </svg>
                  </div>
                </div>
              </main>
            </div>

            <footer class="chart-tabs">
              <div class="chart-tab"><svg class="thumb"><use href="#world" /></svg>
                <div class="tab-tools"><svg><use href="#trash" /></svg><svg viewBox="0 0 15 14"><path d="M5 9.500H1V4l3-3h4v3M4 1v3H1M6 13V8l3-3h5v8zM9 5v3H6" fill="none" stroke="currentColor" stroke-width="1.200" /></svg></div>
              </div>
              <div class="filler"><span class="add"><svg viewBox="0 0 12 12"><path d="M6 1v10M1 6h10" stroke="#e8e6e3" stroke-width="3" /></svg><span>CHART</span></span></div>
            </footer>
          </div>
        </div>
      </div>

      <aside class="rail">
        <svg class="back" viewBox="0 0 16 16"><path d="M8.500 1.500L2 8l6.500 6.500M2.500 8H15" fill="none" stroke="#d0cbc3" stroke-width="3" /></svg>
        <span v-for="t in sideTools" :key="t" class="rail-item"><svg><use :href="'#' + t" /></svg></span>
      </aside>
    </div>
  </div>
</template>

<style>
body { margin: 0; background: #1f2324; }
</style>

<style scoped>
* { box-sizing: border-box; }
.screen { width: 1908px; height: 1071px; overflow: hidden; display: flex; flex-direction: column; background: #1f2324; color: #b8b2a8; font-family: "Noto Sans CJK SC", sans-serif; font-size: 11.4px; line-height: 16px; white-space: nowrap; }
.sprite { position: absolute; width: 0; height: 0; }
svg { flex: none; display: block; }

.browser { height: 90px; background: #323544; font-family: "Open Sans", "Noto Sans", sans-serif; color: #f1f1f4; }
.tabstrip { height: 21px; display: flex; align-items: flex-start; background: #0b0c15; }
.tab { width: 232px; height: 21px; display: flex; background: #323544; }
.favicon { width: 16px; height: 14px; background: #ffc20e; color: #111; font: 16px/11px "Open Sans", sans-serif; text-align: center; }
.tab-title { margin-left: 8px; width: 183px; font-size: 11.4px; font-weight: 600; letter-spacing: -.3px; line-height: 13px; height: 18px; overflow: hidden; -webkit-mask-image: linear-gradient(90deg, #000 82%, transparent); mask-image: linear-gradient(90deg, #000 82%, transparent); }
.tab-close { width: 10px; height: 10px; margin: 1px 0 0 8px; }
.tab-new { width: 12px; height: 12px; margin-left: 16px; }
.win-buttons { width: 150px; height: 12px; margin-left: 1481px; }
.toolbar { height: 35px; display: flex; align-items: center; }
.nav-icons { width: 120px; height: 18px; }
.mark { width: 12px; height: 16px; margin-left: 217px; }
.address { width: 1080px; height: 28px; margin-left: 16px; padding-left: 11px; display: flex; align-items: center; border-radius: 4px; background: #1a1b23; }
.site-info { width: 14px; height: 14px; }
.url { width: 922px; margin-left: 9px; font-size: 13.22px; color: #85878f; }
.url b { font-weight: 400; color: #f4f4f6; }
.address-icons { width: 130px; height: 28px; margin-left: -8px; }
.extensions { width: 220px; height: 20px; margin-left: 134px; }
.vpn { width: 48px; height: 22px; margin-left: 19px; display: flex; align-items: center; justify-content: center; gap: 4px; border: 1px solid #5f6275; border-radius: 11px; font-size: 11.5px; }
.vpn i { width: 6px; height: 6px; border-radius: 50%; background: #b7b9c6; }
.menu { width: 10px; height: 14px; margin-left: 13px; }
.bookmarks { height: 30px; display: flex; align-items: center; padding-left: 2px; }
.site { flex: none; position: relative; width: 16px; height: 16px; margin-right: 16px; text-align: center; }
.site svg { width: 16px; height: 16px; }
.sync { background: #f2f2f2; color: #777; font-size: 7px; line-height: 16px; }
.amazon { border-radius: 2px; background: #fff; color: #111; font-size: 13px; font-weight: 700; line-height: 11px; }
.site .smile { position: absolute; left: 0; bottom: 0; height: 6px; }
.letter-s { border-radius: 50%; background: #14c2c6; color: #fff; font: italic 13px/16px "Liberation Serif", serif; }
.jg { background: #3d8fe0; font-size: 9px; font-weight: 700; }
.bookmark { flex: none; display: flex; align-items: center; gap: 8px; font-size: 11.6px; letter-spacing: -.15px; }
.bookmark svg { width: 16px; height: 16px; }

.topbar { height: 40px; display: flex; align-items: center; background: #1c1e1f; color: #e8e6e3; }
.bird { width: 19px; height: 20px; }
.project { width: 192px; margin-left: 19px; font-size: 14.2px; }
.tool { width: 40px; height: 40px; display: grid; place-items: center; color: #96928c; }
.tool svg { width: 17px; height: 17px; }
.tool.on { background: #1c84b0; color: #e8e6e3; }
.crumb { position: relative; width: 51px; margin-left: 21px; font-size: 12.2px; font-weight: 500; }
.crumb::after { content: ""; position: absolute; left: 23px; bottom: -12px; border: 4px solid transparent; border-top: 0; border-bottom-color: #35393b; }
.search-icon { width: 15px; height: 15px; margin-left: 970px; }
.search-text { width: 171px; margin-left: 10px; font-size: 12.5px; color: #a8a094; }
.right-icons { width: 140px; height: 20px; }

.shell { flex: 1; display: flex; min-height: 0; }
.main { width: 1868px; display: flex; flex-direction: column; }
.titlebar { height: 48px; display: flex; align-items: center; background: #191b1c; border-bottom: 1px solid #3a3e40; }
.dataset-icon { width: 38px; height: 47px; background: #1c84b0; }
.dataset-icon svg { width: 28px; height: 24px; margin-top: 10px; }
.dataset-name { width: 361px; margin-left: 12px; font-size: 17px; color: #c8c3ba; }
.compass { width: 18px; height: 18px; margin-left: 11px; }
.sections { width: 474px; margin-left: 742px; height: 48px; display: flex; gap: 8.200px; }
.sections span { padding: 0 14px; line-height: 46px; font-size: 11.950px; color: #a8a094; }
.sections .active { border-bottom: 2px solid #7d756a; font-weight: 500; color: #c0b8ab; }
.recipe { width: 124px; height: 26px; padding-bottom: 1px; display: flex; align-items: center; justify-content: center; gap: 4px; background: #7c5300; color: #d8d0c0; font-weight: 500; font-size: 11.8px; }
.recipe svg { width: 17px; height: 17px; }
.actions { width: 68px; height: 26px; margin-left: 10px; border: 1px solid #4a4e50; text-align: center; line-height: 23px; font-weight: 500; font-size: 11.8px; color: #d5d0c8; }

.body { flex: 1; display: flex; min-height: 0; }
.columns-panel { width: 239px; border-right: 1px solid #414547; display: flex; flex-direction: column; }
.panel-tabs { height: 42px; display: flex; border-bottom: 1px solid #3a3e40; }
.panel-tabs span { flex: none; width: 132px; height: 41px; padding-left: 15px; line-height: 40px; font-size: 11.7px; }
.panel-tabs .current { width: 98px; padding: 0 2px 0 0; text-align: center; line-height: 37px; font-weight: 700; color: #d0c9be; border-bottom: 2px solid #7d756a; }
.columns-wrap { flex: 1; display: flex; min-height: 0; }
.columns-list { width: 228px; padding: 8px 0 0 4px; display: flex; flex-direction: column; gap: 5px; overflow: hidden; }
.scroll-track { width: 10px; background: #1b1d1f; }
.search-box { flex: none; width: 218px; height: 26px; margin-bottom: 4px; padding: 0 5px 1px 8px; display: flex; align-items: center; justify-content: space-between; border: 1px solid #3c4042; background: #191b1c; color: #6f6b66; font-size: 12px; }
.search-box svg { width: 9px; height: 9px; color: #c8c3ba; }
.column-item { flex: none; width: 208px; height: 26px; padding: 0 0 1.500px 6px; display: flex; align-items: center; border-radius: 3px; background: #191b1c; font-size: 11px; letter-spacing: -.16px; color: #b0a99d; }
.kind { width: 14px; margin-right: 5.700px; display: grid; place-items: center; font-size: 13.500px; font-weight: 500; }
.kind svg { width: 12px; height: 12px; }
.num { color: #5b9fe0; }
.text { color: #f8b733; font: 700 15px/16px "Liberation Serif", serif; }
.date { color: #6cb56c; }
.h-scroll { flex: none; height: 2px; background: #17191b; padding-left: 88px; }
.h-scroll i { display: block; width: 48px; height: 2px; background: #55595b; }

.work { width: 1629px; display: flex; flex-direction: column; }
.chart-area { height: 848px; display: flex; }
.options { width: 249px; padding: 16px 16px 0 15px; border-right: 1px solid #414547; }
.chart-type { position: relative; height: 42px; margin-bottom: 16px; padding: 0 5px 0 8px; display: flex; align-items: center; border: 1px solid #3f4345; background: #191b1c; color: #d0c9be; font-size: 11.6px; }
.chart-type svg { width: 24px; height: 15px; }
.chart-type span { flex: 1; margin: 0 0 2px 6px; }
.caret { width: 0; height: 0; border: 5px solid transparent; border-top: 6px solid #b8b2a8; border-bottom: 0; }
.caret.white { border-width: 4px; border-top-color: #e8e6e3; border-bottom: 0; }
.caret.small { border-width: 4px; border-top-color: #8c857b; border-bottom: 0; }
.caret.mini { border-width: 4px; border-top-color: #c8c2b8; border-bottom: 0; }
.caret.side { border: 5px solid transparent; border-left: 6px solid #b8b2a8; border-right: 0; margin-right: 11px; }
section { border-top: 1px solid #3a3e40; }
h4 { margin: 0; height: 37px; padding-bottom: 2px; display: flex; align-items: center; font-size: 14.300px; font-weight: 400; color: #b0a99d; }
h4 .caret { margin-right: 6px; }
.filters { height: 86px; }
.filters h4 { height: 36px; padding-bottom: 1px; }
.dropzone { height: 41px; border: 1px dashed #45494b; }
.closed { height: 37px; }
.display { height: 157px; }
.display label { display: block; height: 25px; line-height: 22px; font-size: 12px; color: #c0b9ad; }
.select { height: 26px; padding: 0 7px 1px 4px; margin-bottom: 9px; display: flex; align-items: center; justify-content: space-between; border: 1px solid #3f4345; background: #191b1c; color: #d0c9be; font-size: 11.800px; }
.beacon { position: absolute; left: 124px; top: 36px; width: 19px; height: 19px; border-radius: 50%; background: radial-gradient(circle, #219788 0 5px, #1f4d4a 5.600px 9px, transparent 9.500px); box-shadow: 0 0 0 14px rgba(33, 60, 50, .08); }

.chart { width: 1380px; padding: 16px 16px 0 16px; display: flex; flex-direction: column; }
.definition { height: 112px; display: flex; justify-content: space-between; }
.row { display: flex; height: 43px; }
.row.second { height: 44px; margin-top: 10px; }
.row-name { position: relative; width: 53px; line-height: 38px; font-size: 11.7px; }
.row .beacon { left: -19.500px; top: 9px; z-index: 2; }
.row.second .beacon { top: -5px; }
.second .row-name { line-height: 38px; }
.slot { width: 226px; height: 100%; padding: 6px 11px 0 8px; display: flex; border: 1px solid #3a3e40; background: #191b1c; }
.second .slot { padding-top: 7px; }
.geo { width: 29px; line-height: 26px; font-size: 12px; }
.drop { display: flex; align-items: center; gap: 4px; padding-left: 3px; height: 26px; }
.drop svg { width: 8px; height: 12px; }
.pill { width: 176px; height: 26px; padding: 0 9px; display: flex; align-items: center; background: #2e3135; color: #d0c9be; font-size: 11.200px; letter-spacing: -.07px; }
.geo-pill { background: #2b3d22; }
.pill span { flex: 1; margin: 0 0 1px 3px; }
.pill small { font-size: 9.6px; letter-spacing: 0; }
.pill svg { width: 11px; height: 12px; color: #77756f; }
.exports { width: 202px; font-weight: 500; font-size: 12px; color: #d5d0c8; }
.exports span { margin-bottom: 2px; }
.publish, .download { position: relative; height: 30px; display: flex; align-items: center; justify-content: center; gap: 6px; }
.publish { background: #1c82b0; color: #e8e6e3; }
.download { margin-top: 10px; border: 1px solid #43474a; }
.publish svg { width: 15px; height: 15px; }
.download svg { width: 13px; height: 13px; margin-top: -3px; }
.download .beacon { left: 90px; top: 32px; }

.frame { height: 704px; border: 1px solid #3a3e40; background: #191b1c; }
.frame-head { height: 36px; display: flex; align-items: center; padding-left: 8px; }
.frame-title { width: 1081px; margin-bottom: 2px; font-size: 15.9px; }
.records, .run { height: 26px; line-height: 24px; font-size: 11.7px; color: #d0c9be; border-right: 1px solid #3a3e40; }
.records { width: 95px; }
.run { width: 87px; padding-left: 12px; }
.frame-icons { width: 44px; height: 14px; margin-left: 19px; }
.frame-body { display: flex; }
.map { position: relative; width: 1259px; height: 666px; background: #d4dadc; overflow: hidden; }
.tiles { width: 1259px; height: 666px; }
.land { fill: #fafaf8; }
.lake { fill: #d4dadc; }
.river { fill: none; stroke: #e2e6e8; stroke-width: 1.100; stroke-linejoin: round; }
.border { fill: none; stroke: #f1dfe2; stroke-width: 1; stroke-linejoin: round; }
.region { stroke-width: 1.500; stroke-linejoin: round; fill-opacity: .5; stroke-opacity: .72; }
.red { fill: #f02828; stroke: #e81018; }
.orange { fill: #ee8c28; stroke: #e97a0c; }
.yellow { fill: #eeee28; stroke: #e8e80c; }
.green { fill: #26d228; stroke: #0cc010; }
.place { text-anchor: middle; font: 600 10.500px "Open Sans", sans-serif; fill: #8797a3; stroke: #fafaf8; stroke-width: 2px; paint-order: stroke; }
.place.big { font-size: 11.600px; }
.place.us { font-size: 12px; }
.zoomer { position: absolute; left: 10px; top: 10px; width: 26px; height: 53px; border-radius: 4px; background: #191b1c; color: #e8e6e3; box-shadow: 0 1px 4px rgba(0, 0, 0, .6); font: 700 18px/26px "DejaVu Sans", sans-serif; text-align: center; }
.zoomer span { display: block; height: 26px; line-height: 25px; }
.zoomer span + span { height: 27px; border-top: 1px solid #4b4f51; }
.credit { position: absolute; right: 0; bottom: 0; width: 261px; height: 16px; padding-left: 5px; background: #4d5153; color: #d8d2c8; font-size: 10.35px; font-weight: 500; line-height: 15px; }
.credit a { color: #54b4e4; }
.legend { width: 87px; height: 666px; }
.legend text { fill: #d0c9be; font-size: 10.2px; }

.chart-tabs { height: 45px; display: flex; }
.chart-tabs::before { content: ""; width: 19px; border-top: 1px solid #414547; }
.chart-tab { width: 85px; height: 43px; display: flex; border: solid #414547; border-width: 0 1px; background: #191b1c; }
.thumb { width: 31px; height: 19px; margin: 12px 0 0 17px; }
.tab-tools { margin: 5px 0 0 17px; width: 15px; color: #55524e; display: flex; flex-direction: column; align-items: center; gap: 4px; }
.tab-tools svg { width: 15px; height: 14px; }
.filler { flex: 1; border-top: 1px solid #414547; padding: 8px 0 0 11px; }
.add { width: 71px; height: 26px; display: flex; align-items: center; justify-content: center; gap: 5px; background: #0752ac; color: #e8e6e3; font-size: 12px; font-weight: 500; }
.add span { margin-bottom: 1px; }
.add svg { width: 12px; height: 12px; }

.rail { width: 40px; border-left: 1px solid #414547; background: #17191b; display: flex; flex-direction: column; align-items: center; }
.back { width: 16px; height: 16px; margin: 16px 0 31px; }
.rail-item { width: 20px; height: 20px; margin-bottom: 28px; border-radius: 50%; background: #86c3ff; }
.rail-item svg { width: 20px; height: 20px; }
</style>
